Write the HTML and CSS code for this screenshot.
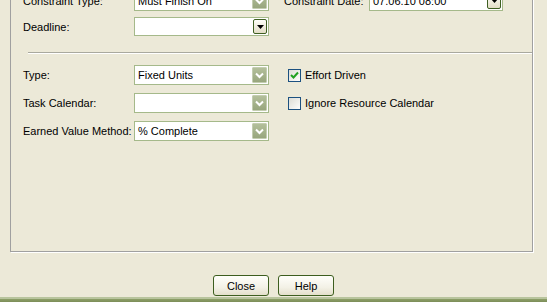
FILE: index.html
```html
<!DOCTYPE html>
<html lang="en">
<head>
  <meta charset="UTF-8" />
  <title>Task Information</title>
  <link rel="stylesheet" href="styles.css">
</head>
<body>
  <div class="panel">
    <div class="top-grid">
      <label class="field-label">Constraint Type:</label>
      <div class="combo">
        <span class="combo-text">Must Finish On</span>
        <span class="arrow"><svg width="15" height="16" viewBox="0 0 15 16"><path d="M4 6.5 L7.5 10 L11 6.5" fill="none" stroke="#fff" stroke-width="2"/></svg></span>
      </div>
      <span></span>
      <label class="field-label">Constraint Date:</label>
      <div class="combo">
        <span class="combo-text">07.06.10 08:00</span>
        <span class="drop-btn"><svg width="7" height="4" viewBox="0 0 7 4"><path d="M0 0 H7 L3.5 4 Z" fill="#000"/></svg></span>
      </div>

      <label class="field-label">Deadline:</label>
      <div class="combo combo-small">
        <span class="combo-text"></span>
        <span class="drop-btn"><svg width="7" height="4" viewBox="0 0 7 4"><path d="M0 0 H7 L3.5 4 Z" fill="#000"/></svg></span>
      </div>
    </div>

    <div class="separator"></div>

    <div class="bottom-grid">
      <label class="field-label">Type:</label>
      <div class="combo">
        <span class="combo-text">Fixed Units</span>
        <span class="arrow"><svg width="15" height="16" viewBox="0 0 15 16"><path d="M4 6.5 L7.5 10 L11 6.5" fill="none" stroke="#fff" stroke-width="2"/></svg></span>
      </div>
      <span></span>
      <label class="check">
        <span class="box"><svg width="11" height="11" viewBox="0 0 11 11"><path d="M2 5 L4.5 7.5 L9 2.5" fill="none" stroke="#21a121" stroke-width="2"/></svg></span>
        Effort Driven
      </label>

      <label class="field-label">Task Calendar:</label>
      <div class="combo">
        <span class="combo-text"></span>
        <span class="arrow"><svg width="15" height="16" viewBox="0 0 15 16"><path d="M4 6.5 L7.5 10 L11 6.5" fill="none" stroke="#fff" stroke-width="2"/></svg></span>
      </div>
      <span></span>
      <label class="check">
        <span class="box"></span>
        Ignore Resource Calendar
      </label>

      <label class="field-label">Earned Value Method:</label>
      <div class="combo">
        <span class="combo-text">% Complete</span>
        <span class="arrow"><svg width="15" height="16" viewBox="0 0 15 16"><path d="M4 6.5 L7.5 10 L11 6.5" fill="none" stroke="#fff" stroke-width="2"/></svg></span>
      </div>
    </div>
  </div>

  <div class="buttons">
    <button class="btn">Close</button>
    <button class="btn">Help</button>
  </div>

  <div class="taskbar"></div>
</body>
</html>
```

FILE: styles.css
```css
body {
  margin: 0;
  height: 302px;
  overflow: hidden;
  display: flex;
  flex-direction: column;
  background: #ece9d8;
  font-family: 'Liberation Sans', Arial, sans-serif;
  font-size: 11px;
  color: #000;
}

.panel {
  box-sizing: border-box;
  height: 272px;
  margin: -20px 14px 0 10px;
  padding: 10px 0 0 12px;
  border: 1px solid #a0a0a0;
  box-shadow: 1px 1px 0 #fff;
}

.top-grid {
  display: grid;
  grid-template-columns: 111px 135px 15px 85px 134px;
  grid-template-rows: 20px 19px;
  row-gap: 6px;
  align-items: center;
}

.bottom-grid {
  display: grid;
  grid-template-columns: 111px 135px 19px auto;
  grid-auto-rows: 20px;
  row-gap: 8px;
  align-items: center;
}

.field-label {
  white-space: nowrap;
}

.combo {
  box-sizing: border-box;
  height: 20px;
  display: flex;
  align-items: center;
  background: #fff;
  border: 1px solid #a5b98a;
}

.combo-small {
  height: 19px;
}

.combo-text {
  flex: 1;
  padding-left: 3px;
  white-space: nowrap;
}

.arrow {
  box-sizing: border-box;
  width: 15px;
  height: 16px;
  margin-right: 1px;
  display: flex;
  background: linear-gradient(#b3bf9b, #98a67d);
  border: 1px solid #c3cdb0;
  border-radius: 1px;
}

.arrow svg {
  margin: -1px;
}

.drop-btn {
  box-sizing: border-box;
  width: 14px;
  height: 15px;
  margin-right: 1px;
  display: flex;
  align-items: center;
  justify-content: center;
  background: linear-gradient(#fffffa, #e2ddc6);
  border: 1px solid #3f5f22;
  border-radius: 2px;
}

.separator {
  height: 1px;
  margin: 16px 0 11px 5px;
  background: #a9a99e;
  border-bottom: 1px solid #fff;
}

.check {
  display: flex;
  align-items: center;
  gap: 4px;
  white-space: nowrap;
}

.box {
  box-sizing: border-box;
  width: 13px;
  height: 13px;
  display: flex;
  align-items: center;
  justify-content: center;
  border: 1px solid #1c5180;
  background: linear-gradient(135deg, #dcdcd5, #fdfdfc);
}

.buttons {
  display: flex;
  justify-content: center;
  gap: 9px;
  margin-top: 23px;
  height: 22px;
}

.btn {
  box-sizing: border-box;
  width: 56px;
  height: 21px;
  padding: 0;
  font-family: inherit;
  font-size: 11px;
  color: #000;
  background: linear-gradient(#fffffb, #f3f1e6 60%, #e3dfcb);
  border: 1px solid #3d5e1f;
  border-radius: 3px;
}

.taskbar {
  height: 5px;
  background: linear-gradient(#b8c49d 0, #b8c49d 2px, #8d9f68 2px, #7c8d58);
}
```
